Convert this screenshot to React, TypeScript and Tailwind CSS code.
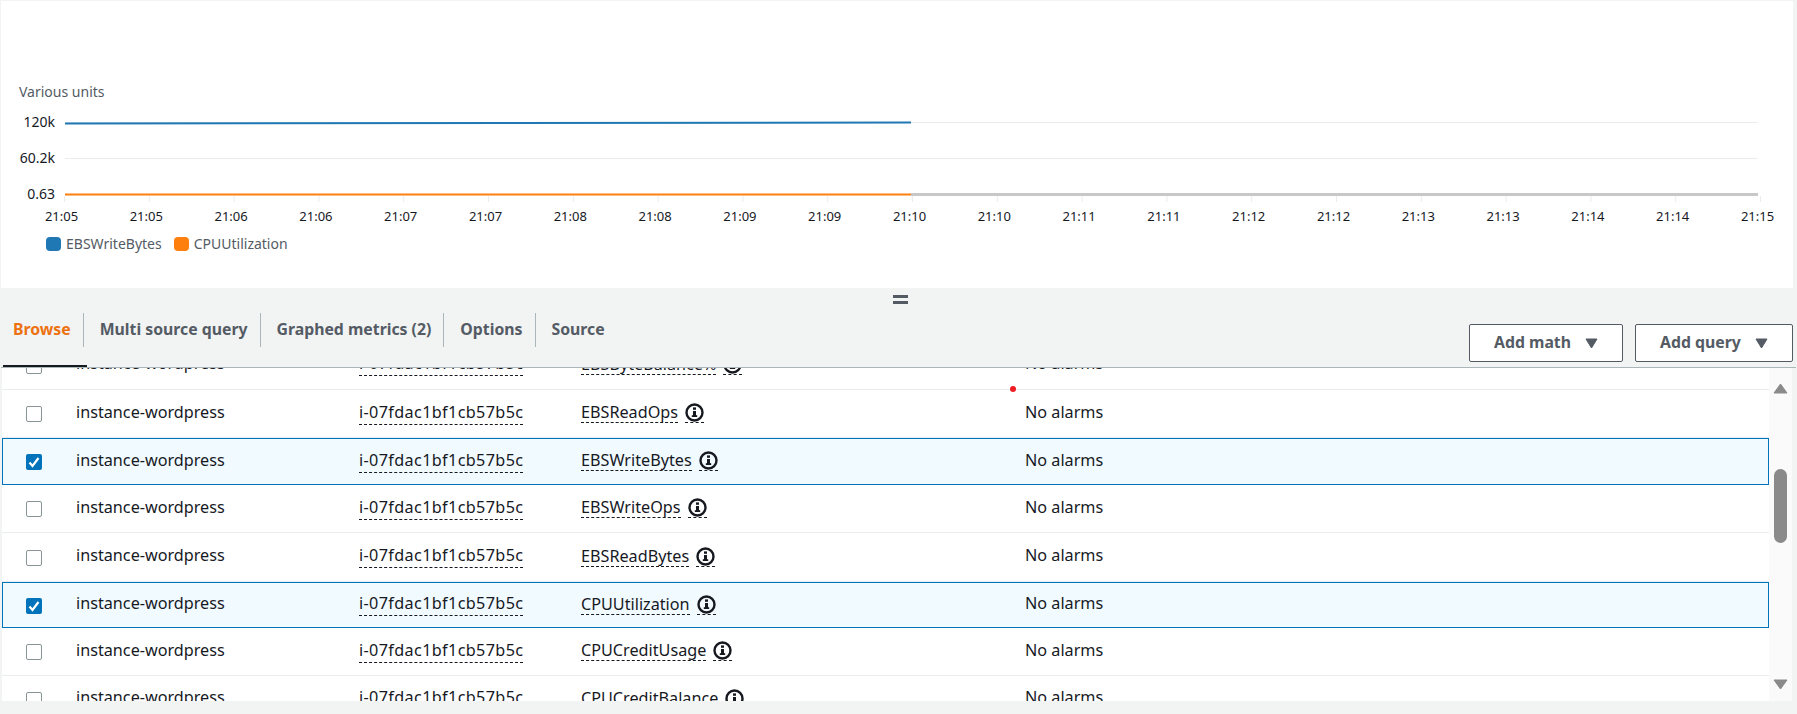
const TICKS = ['21:05', '21:05', '21:06', '21:06', '21:07', '21:07', '21:08', '21:08', '21:09', '21:09', '21:10', '21:10', '21:11', '21:11', '21:12', '21:12', '21:13', '21:13', '21:14', '21:14', '21:15']

const TABS = [
  { label: 'Browse', active: true },
  { label: 'Multi source query' },
  { label: 'Graphed metrics (2)' },
  { label: 'Options' },
  { label: 'Source', last: true },
]

const ROWS = [
  { metric: 'EBSByteBalance%', height: 'h-[22px]', clipped: true },
  { metric: 'EBSReadOps', height: 'h-[48px]' },
  { metric: 'EBSWriteBytes', height: 'h-[47px]', selected: true },
  { metric: 'EBSWriteOps', height: 'h-[48px]' },
  { metric: 'EBSReadBytes', height: 'h-[49px]' },
  { metric: 'CPUUtilization', height: 'h-[46px]', selected: true },
  { metric: 'CPUCreditUsage', height: 'h-[48px]' },
  { metric: 'CPUCreditBalance', height: 'h-[25px]', cut: true },
]

function Chart() {
  return (
    <svg width="1793" height="120" className="block">
      <line x1="65" x2="1758" y1="12.5" y2="12.5" stroke="#eaeded" />
      <line x1="65" x2="1758" y1="48.5" y2="48.5" stroke="#eaeded" />
      <line x1="911" x2="1758" y1="84.5" y2="84.5" stroke="#c8c8c8" strokeWidth="3" />
      <line x1="65" x2="911" y1="13.5" y2="12.5" stroke="#1f77b4" strokeWidth="2" />
      <line x1="65" x2="911" y1="84.5" y2="84.5" stroke="#ff7f0e" strokeWidth="2" />
      {['120k', '60.2k', '0.63'].map((t, i) => (
        <text key={t} x="55" y={17 + i * 36} textAnchor="end" fontSize="14" fill="#16191f">{t}</text>
      ))}
      {TICKS.map((t, i) => (
        <g key={i}>
          <line x1={64.5 + i * 84.8} x2={64.5 + i * 84.8} y1="86" y2="92" stroke="#eaeded" />
          <text x={61.5 + i * 84.8} y="111" textAnchor="middle" fontSize="13" fill="#16191f">{t}</text>
        </g>
      ))}
    </svg>
  )
}

function InfoIcon() {
  return (
    <span className="border-b border-dashed border-[#16191f] pt-[3px] ml-[7px] inline-flex">
      <svg width="19" height="19" viewBox="0 0 19 19">
        <circle cx="9.5" cy="9.5" r="8" fill="none" stroke="#16191f" strokeWidth="2.4" />
        <rect x="8" y="8" width="3" height="5" fill="#16191f" />
        <rect x="6.8" y="12.2" width="5.4" height="1.8" fill="#16191f" />
        <rect x="8" y="4.4" width="3" height="2.4" fill="#16191f" />
      </svg>
    </span>
  )
}

function Checkbox({ checked }: { checked?: boolean }) {
  if (checked) {
    return (
      <span className="w-4 h-4 rounded-[2px] bg-[#0073bb] flex items-center justify-center">
        <svg width="12" height="12" viewBox="0 0 12 12">
          <path d="M1.5 6.5 L4.5 10 L10.5 2" fill="none" stroke="#fff" strokeWidth="2.2" />
        </svg>
      </span>
    )
  }
  return <span className="w-4 h-4 rounded-[2px] bg-white border border-[#879596] block" />
}

function Row({ metric, height, selected, clipped, cut }: { metric: string; height: string; selected?: boolean; clipped?: boolean; cut?: boolean }) {
  return (
    <div className={`${height} overflow-hidden flex ${clipped || cut ? 'items-start' : 'items-center'} ${selected ? 'bg-[#f1faff] border border-[#0073bb]' : cut ? '' : 'border-b border-[#eaeded]'}`}>
      <div className={`flex items-center w-full ${selected ? '-ml-px' : ''} ${clipped ? '-mt-[17px]' : cut ? 'pt-[9px]' : 'pb-[3px]'}`}>
        <div className="w-[74px] pl-[24px] pt-[5px]">
          <Checkbox checked={selected} />
        </div>
        <div className="w-[283px]">instance-wordpress</div>
        <div className="w-[222px]"><span className="border-b border-dashed border-[#16191f] pb-[1px] tracking-[0.36px]">i-07fdac1bf1cb57b5c</span></div>
        <div className="w-[444px] flex items-center">
          <span className="border-b border-dashed border-[#16191f] pt-[2px] leading-[20px]">{metric}</span>
          <InfoIcon />
        </div>
        <div>No alarms</div>
      </div>
    </div>
  )
}

function LegendItem({ color, label }: { color: string; label: string }) {
  return (
    <div className="flex items-center gap-[5px]">
      <span className={`w-[15px] h-[14px] rounded-[4px] ${color}`} />
      <span>{label}</span>
    </div>
  )
}

export default function App() {
  return (
    <div className="w-[1797px] h-[714px] overflow-hidden bg-[#f2f3f3] text-[#16191f] text-[16.2px] font-['Noto_Sans',sans-serif]">
      <div className="h-[287px] mt-px ml-px mr-[4px] bg-white pt-[83px] text-[14px]">
        <div className="pl-[18px] text-[#545b64] leading-[16px]">Various units</div>
        <div className="mt-[10px] -ml-px"><Chart /></div>
        <div className="mt-[6px] pl-[45px] flex gap-[12px] text-[#545b64] leading-[16px]">
          <LegendItem color="bg-[#1f77b4]" label="EBSWriteBytes" />
          <LegendItem color="bg-[#ff7f0e]" label="CPUUtilization" />
        </div>
      </div>
      <div className="relative">
        <div className="absolute left-[893px] top-[7px] w-[15px] h-[9px] border-y-[3px] border-[#545b64]" />
      </div>
      <div className="h-[80px] flex justify-between pr-[3px] text-[15.8px] font-bold border-b border-[#aab7b8] mx-px">
        <div className="flex pt-[25px]">
          {TABS.map(t => (
            <div key={t.label} className={`relative h-[54px] ${t.active ? 'pl-[12px] text-[#ec7211]' : 'pl-[16px] text-[#545b64]'} ${t.last ? '' : 'pr-[13px]'}`}>
              <div className="h-[34px] flex items-center">{t.label}</div>
              {!t.last && <span className="absolute right-0 top-0 h-[34px] w-px bg-[#aab7b8]" />}
              {t.active && <span className="absolute left-[2px] -right-[3px] bottom-0 h-[2px] bg-[#16191f]" />}
            </div>
          ))}
        </div>
        <div className="flex gap-[12px] pt-[36px]">
          {['Add math', 'Add query'].map((t, i) => (
            <div key={t} className={`${i === 0 ? 'w-[154px]' : 'w-[158px]'} h-[38px] bg-white border border-[#545b64] rounded-[2px] text-[#545b64] flex items-center justify-center gap-[14px]`}>
              {t}
              <svg width="13" height="11" viewBox="0 0 13 11"><path d="M1 1H12L6.5 10Z" fill="#545b64" stroke="#545b64" strokeLinejoin="round" /></svg>
            </div>
          ))}
        </div>
      </div>
      <div className="h-[333px] relative ml-[2px] mr-[5px] bg-white flex overflow-hidden">
        <div className="flex-1">
          {ROWS.map(r => <Row key={r.metric} {...r} />)}
        </div>
        <div className="w-[23px] bg-[#fafafa] flex flex-col items-center justify-between pt-[15px] pb-[11px] relative">
          <svg width="15" height="11" viewBox="0 0 15 11"><path d="M7.5 1L14 10H1Z" fill="#8a8a8a" stroke="#8a8a8a" strokeLinejoin="round" /></svg>
          <div className="absolute left-[5px] top-[101px] w-[13px] h-[74px] rounded-full bg-[#8a8a8a]" />
          <svg width="15" height="11" viewBox="0 0 15 11"><path d="M1 1H14L7.5 10Z" fill="#8a8a8a" stroke="#8a8a8a" strokeLinejoin="round" /></svg>
        </div>
        <span className="absolute left-[1008px] top-[18px] w-[6px] h-[6px] rounded-full bg-[#f01c24]" />
      </div>
    </div>
  )
}
